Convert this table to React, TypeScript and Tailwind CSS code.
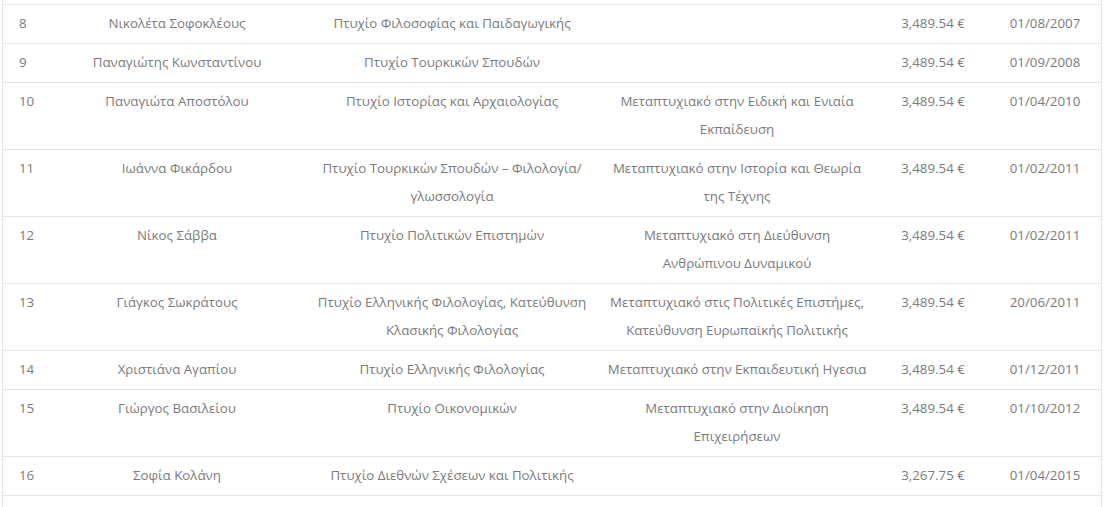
const rows = [
  { n: "8", name: "Νικολέτα Σοφοκλέους", degree: ["Πτυχίο Φιλοσοφίας και Παιδαγωγικής"], master: [], salary: "3,489.54 €", date: "01/08/2007" },
  { n: "9", name: "Παναγιώτης Κωνσταντίνου", degree: ["Πτυχίο Τουρκικών Σπουδών"], master: [], salary: "3,489.54 €", date: "01/09/2008" },
  { n: "10", name: "Παναγιώτα Αποστόλου", degree: ["Πτυχίο Ιστορίας και Αρχαιολογίας"], master: ["Μεταπτυχιακό στην Ειδική και Ενιαία", "Εκπαίδευση"], salary: "3,489.54 €", date: "01/04/2010" },
  { n: "11", name: "Ιωάννα Φικάρδου", degree: ["Πτυχίο Τουρκικών Σπουδών – Φιλολογία/", "γλωσσολογία"], master: ["Μεταπτυχιακό στην Ιστορία και Θεωρία", "της Τέχνης"], salary: "3,489.54 €", date: "01/02/2011" },
  { n: "12", name: "Νίκος Σάββα", degree: ["Πτυχίο Πολιτικών Επιστημών"], master: ["Μεταπτυχιακό στη Διεύθυνση", "Ανθρώπινου Δυναμικού"], salary: "3,489.54 €", date: "01/02/2011" },
  { n: "13", name: "Γιάγκος Σωκράτους", degree: ["Πτυχίο Ελληνικής Φιλολογίας, Κατεύθυνση", "Κλασικής Φιλολογίας"], master: ["Μεταπτυχιακό στις Πολιτικές Επιστήμες,", "Κατεύθυνση Ευρωπαϊκής Πολιτικής"], salary: "3,489.54 €", date: "20/06/2011" },
  { n: "14", name: "Χριστιάνα Αγαπίου", degree: ["Πτυχίο Ελληνικής Φιλολογίας"], master: ["Μεταπτυχιακό στην Εκπαιδευτική Ηγεσια"], salary: "3,489.54 €", date: "01/12/2011" },
  { n: "15", name: "Γιώργος Βασιλείου", degree: ["Πτυχίο Οικονομικών"], master: ["Μεταπτυχιακό στην Διοίκηση", "Επιχειρήσεων"], salary: "3,489.54 €", date: "01/10/2012" },
  { n: "16", name: "Σοφία Κολάνη", degree: ["Πτυχίο Διεθνών Σχέσεων και Πολιτικής"], master: [], salary: "3,267.75 €", date: "01/04/2015" },
];

function Lines({ lines }: { lines: string[] }) {
  return (
    <>
      {lines.map((l) => (
        <span key={l} className="block whitespace-nowrap">
          {l}
        </span>
      ))}
    </>
  );
}

export default function App() {
  return (
    <div className="h-[507px] w-[1115px] overflow-hidden bg-white">
      <div
        className="ml-[2px] w-[1100px] border-x border-[#e4e4e4] text-[13.3px] leading-[28px] text-[#7b7b7b]"
        style={{ fontFamily: "'Open Sans', 'Noto Sans', sans-serif" }}
      >
        <div className="h-[4px]" />
        <table className="w-full table-fixed border-collapse">
          <colgroup>
            <col className="w-[44px]" />
            <col className="w-[260px]" />
            <col className="w-[290px]" />
            <col className="w-[280px]" />
            <col className="w-[112px]" />
            <col className="w-[112px]" />
          </colgroup>
          <tbody>
            {rows.map((r) => (
              <tr key={r.n} className="border-t border-[#e4e4e4] align-top">
                <td className="pl-[16px] pt-[4px] pb-[6px] text-left">{r.n}</td>
                <td className="px-[4px] pt-[4px] pb-[6px] text-center whitespace-nowrap">{r.name}</td>
                <td className="px-[4px] pt-[4px] pb-[6px] text-center">
                  <Lines lines={r.degree} />
                </td>
                <td className="px-[4px] pt-[4px] pb-[6px] text-center">
                  <Lines lines={r.master} />
                </td>
                <td className="px-[4px] pt-[4px] pb-[6px] text-center">{r.salary}</td>
                <td className="px-[4px] pt-[4px] pb-[6px] text-center">{r.date}</td>
              </tr>
            ))}
            <tr className="border-t border-[#e4e4e4]">
              <td colSpan={6} className="h-[40px]" />
            </tr>
          </tbody>
        </table>
      </div>
    </div>
  );
}
